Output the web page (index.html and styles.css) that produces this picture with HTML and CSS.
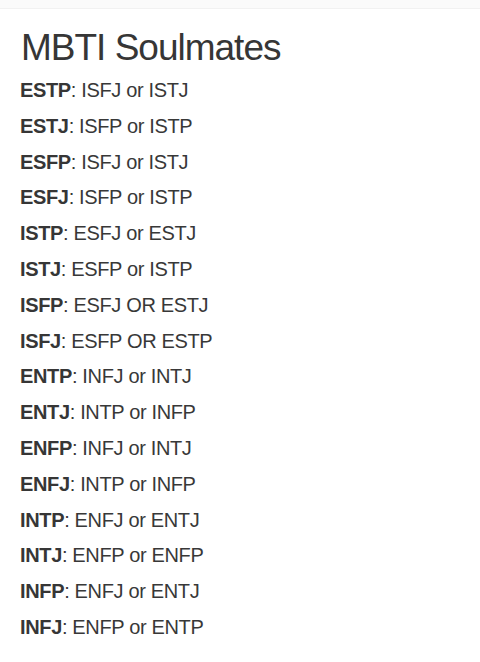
FILE: index.html
```html
<!DOCTYPE html>
<html>
<head>
<meta charset="utf-8">
<link rel="stylesheet" href="styles.css">
</head>
<body>
<div class="topbar"></div>
<main class="content">
  <h1 class="title">MBTI Soulmates</h1>
  <ul class="list">
    <li><b>ESTP</b>: ISFJ or ISTJ</li>
    <li><b>ESTJ</b>: ISFP or ISTP</li>
    <li><b>ESFP</b>: ISFJ or ISTJ</li>
    <li><b>ESFJ</b>: ISFP or ISTP</li>
    <li><b>ISTP</b>: ESFJ or ESTJ</li>
    <li><b>ISTJ</b>: ESFP or ISTP</li>
    <li><b>ISFP</b>: ESFJ OR ESTJ</li>
    <li><b>ISFJ</b>: ESFP OR ESTP</li>
    <li><b>ENTP</b>: INFJ or INTJ</li>
    <li><b>ENTJ</b>: INTP or INFP</li>
    <li><b>ENFP</b>: INFJ or INTJ</li>
    <li><b>ENFJ</b>: INTP or INFP</li>
    <li><b>INTP</b>: ENFJ or ENTJ</li>
    <li><b>INTJ</b>: ENFP or ENFP</li>
    <li><b>INFP</b>: ENFJ or ENTJ</li>
    <li><b>INFJ</b>: ENFP or ENTP</li>
  </ul>
</main>
</body>
</html>
```
FILE: styles.css
```css
html, body {
  margin: 0;
  padding: 0;
  background: #ffffff;
}
body {
  font-family: "Liberation Sans", Arial, sans-serif;
  color: #383838;
}
.topbar {
  height: 8px;
  background: #fafafa;
  border-bottom: 1px solid #f1f1f1;
}
.content {
  padding: 17px 20px 0 20px;
}
.title {
  margin: 0 0 0 1px;
  font-size: 37px;
  line-height: 44px;
  font-weight: 400;
  letter-spacing: -1px;
  color: #363636;
}
.list {
  list-style: none;
  margin: 3px 0 0 0;
  padding: 0;
}
.list li {
  font-size: 20px;
  line-height: 35.8px;
  height: 35.8px;
  letter-spacing: -0.35px;
}
.list b {
  font-weight: 700;
  color: #363636;
}
```
